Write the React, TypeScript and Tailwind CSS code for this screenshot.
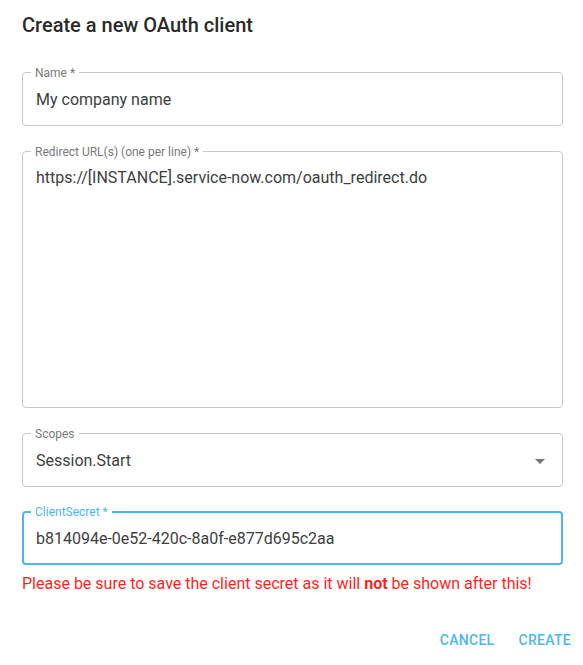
import React from 'react';

const Field = ({
  label,
  value,
  height = 'h-[54px]',
  focused = false,
  multiline = false,
  select = false,
}: {
  label: string;
  value: string;
  height?: string;
  focused?: boolean;
  multiline?: boolean;
  select?: boolean;
}) => {
  return (
    <div
      className={
        'relative rounded-[4px] ' +
        height +
        (focused ? ' border-2 border-[#4db6f2]' : ' border border-[#c8c8c8]') +
        (multiline ? ' pt-[16px]' : ' flex items-center')
      }
    >
      <span
        className={
          'absolute bg-white px-[4px] text-[12px] leading-[14px] ' +
          (focused ? 'left-[7px] -top-[8px] text-[#4db6f2]' : 'left-[8px] -top-[7px] text-[#7a7a7a]')
        }
      >
        {label}
      </span>
      <div
        className={
          'flex-1 text-[16px] leading-[19px] text-[#3e3e3e] ' + (focused ? 'pl-[12px]' : 'pl-[13px]')
        }
      >
        {value}
      </div>
      {select && (
        <svg width="10" height="5" viewBox="0 0 10 5" className="mr-[17px] mt-[2px]">
          <path d="M0 0 L10 0 L5 5 Z" fill="#757575" />
        </svg>
      )}
    </div>
  );
};

export default function App() {
  return (
    <div
      className="w-[583px] h-[665px] bg-white pl-[22px] pr-[20px]"
      style={{ fontFamily: 'Roboto, "Liberation Sans", sans-serif' }}
    >
      <h2 className="pt-[11px] text-[20px] leading-[28px] font-medium text-[#2a2a2a]">
        Create a new OAuth client
      </h2>

      <div className="mt-[33px] flex flex-col gap-[25px]">
        <Field label="Name *" value="My company name" />
        <Field
          label="Redirect URL(s) (one per line) *"
          value="https://[INSTANCE].service-now.com/oauth_redirect.do"
          height="h-[257px]"
          multiline
        />
        <Field label="Scopes" value="Session.Start" select />
        <div className="-mt-[1px]">
          <Field label="ClientSecret *" value="b814094e-0e52-420c-8a0f-e877d695c2aa" focused />
        </div>
      </div>

      <p className="mt-[9px] text-[16px] leading-[19px] text-[#ff1f1f]">
        Please be sure to save the client secret as it will <b className="font-bold">not</b> be shown
        after this!
      </p>

      <div className="mt-[33px] flex justify-end gap-[8px] -mr-[16px]">
        <button className="px-[8px] py-[6px] text-[14px] leading-[16px] font-medium uppercase tracking-[0.3px] text-[#4db6f2]">
          Cancel
        </button>
        <button className="px-[8px] py-[6px] text-[14px] leading-[16px] font-medium uppercase tracking-[0.3px] text-[#4db6f2]">
          Create
        </button>
      </div>
    </div>
  );
}
